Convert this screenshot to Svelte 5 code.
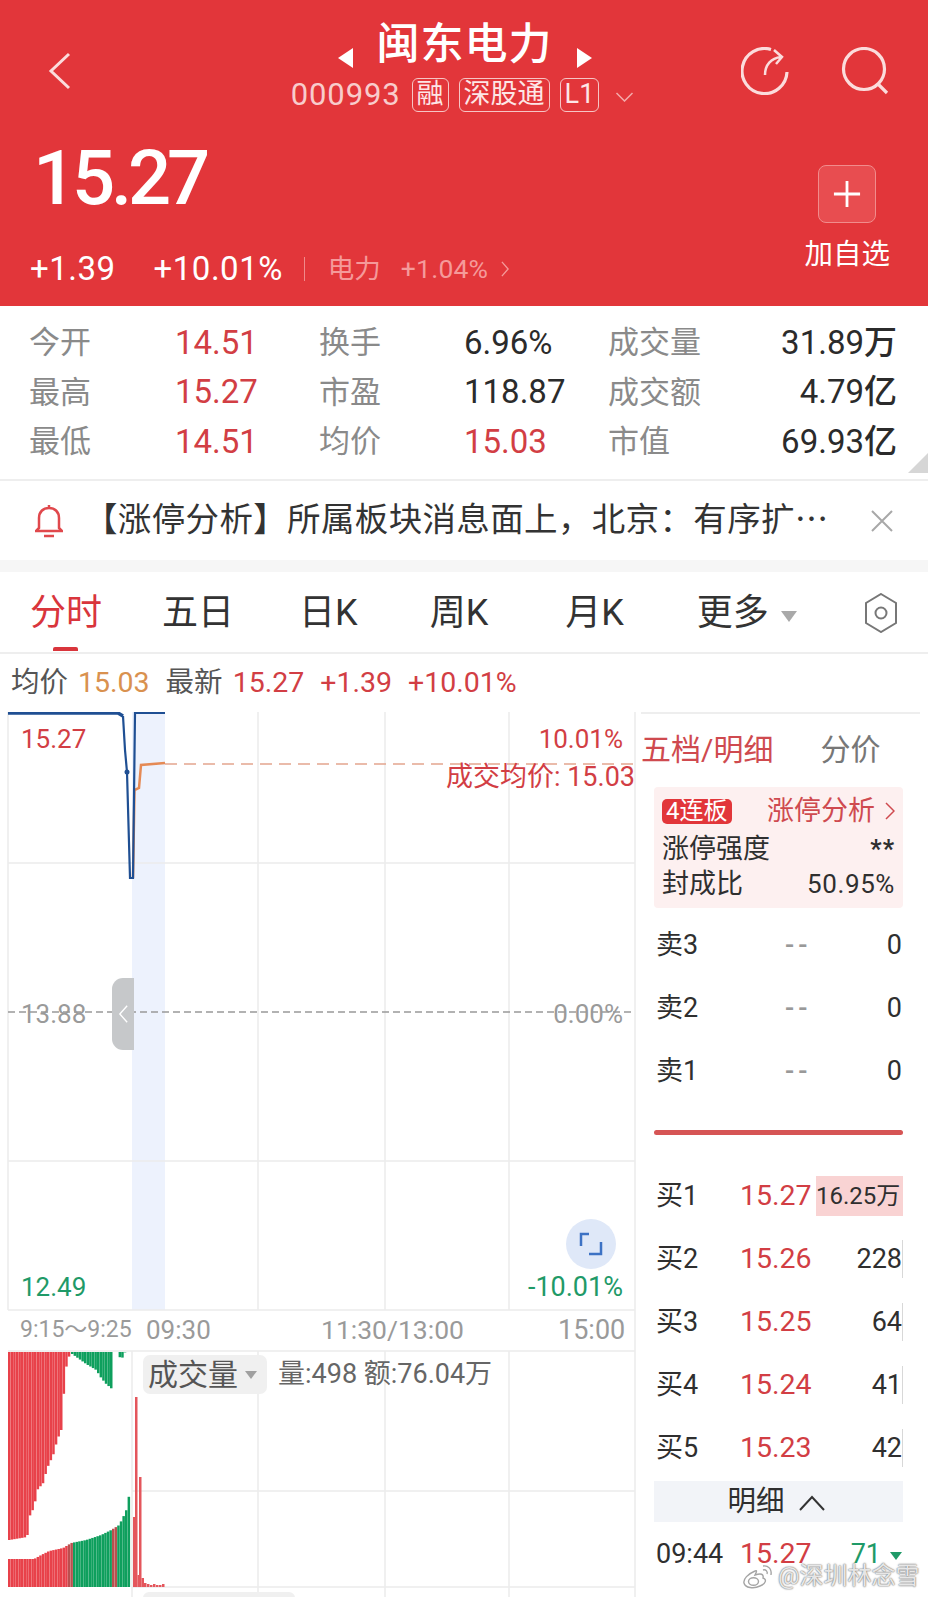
<script>
	const stats = [
		['今开', '14.51', 'up', '换手', '6.96%', '', '成交量', '31.89万'],
		['最高', '15.27', 'up', '市盈', '118.87', '', '成交额', '4.79亿'],
		['最低', '14.51', 'up', '均价', '15.03', 'up', '市值', '69.93亿']
	];
	const tabs = ['五日', '日K', '周K', '月K'];
	const sells = [['卖3'], ['卖2'], ['卖1']];
	const buys = [
		['买1', '15.27', '16.25万'],
		['买2', '15.26', '228'],
		['买3', '15.25', '64'],
		['买4', '15.24', '41'],
		['买5', '15.23', '42']
	];

	// piecewise linear lookup for the volume bar outlines
	function lerp(points, x) {
		for (let i = 1; i < points.length; i++) {
			const [x0, y0] = points[i - 1];
			const [x1, y1] = points[i];
			if (x <= x1) return y0 + ((y1 - y0) * (x - x0)) / (x1 - x0);
		}
		return points[points.length - 1][1];
	}

	const topRed = [[8, 1540], [26, 1537], [28, 1517], [33, 1507], [36, 1490], [42, 1483], [46, 1468], [52, 1455], [56, 1440], [60, 1430], [62, 1422], [63, 1375], [69, 1352]];
	const topGreen = [[71, 1354], [85, 1364], [95, 1370], [100, 1378], [105, 1384], [112, 1390]];
	const topGreen2 = [[116, 1352], [120, 1360], [124, 1352]];
	const lowBars = [[8, 1559], [33, 1559], [40, 1555], [48, 1551], [62, 1548], [70, 1543], [85, 1540], [100, 1535], [110, 1530], [118, 1525], [122, 1517], [126, 1508], [129, 1487]];

	const bars = [];
	for (let x = 8; x < 69; x += 2.6) {
		bars.push({ x, y: 1352, h: lerp(topRed, x) - 1352, c: '#e8414a' });
	}
	for (let x = 71; x < 112; x += 2.6) {
		bars.push({ x, y: 1352, h: lerp(topGreen, x) - 1352, c: '#0e9f5d' });
	}
	for (let x = 116; x < 124; x += 2.6) {
		bars.push({ x, y: 1352, h: lerp(topGreen2, x) - 1352, c: '#0e9f5d' });
	}
	for (let x = 8; x < 130; x += 2.6) {
		const y = lerp(lowBars, x);
		let c = x < 71 ? '#e8414a' : '#0e9f5d';
		if (x > 66 && x < 71) c = '#b9504f';
		if (x > 110 && x < 116) c = '#b9504f';
		bars.push({ x, y, h: 1587 - y, c });
	}
	const after = [[133, 1517], [135, 1397], [137.5, 1575], [139, 1477], [141.5, 1578], [144, 1583], [147, 1584], [150, 1585], [153, 1584], [156, 1585], [159, 1585], [162, 1584]];
	for (const [x, y] of after) {
		bars.push({ x, y, h: 1587 - y, c: '#e4565c' });
	}
</script>

<div class="page">
	<header class="top">
		<div class="nav">
			<svg class="back" viewBox="0 0 24 38"><path d="M21 2 L3 19 L21 36" /></svg>
			<div class="name">
				<div class="title">
					<span class="arrow left"></span>
					<h1>闽东电力</h1>
					<span class="arrow right"></span>
				</div>
				<div class="sub">
					<span class="code">000993</span>
					<span class="tag">融</span>
					<span class="tag">深股通</span>
					<span class="tag">L1</span>
					<svg class="down" viewBox="0 0 18 10"><path d="M1 1 L9 9 L17 1" /></svg>
				</div>
			</div>
			<div class="tools">
				<svg class="icon" viewBox="0 0 48 48">
					<path d="M30 2.5 A 22.5 22.5 0 1 0 46 25" />
					<path d="M24 28 C 24 18 30 11 40 10 M33 3 L41 10 L35 17" class="thin" />
				</svg>
				<svg class="icon" viewBox="0 0 48 48">
					<circle cx="23" cy="22" r="20.5" />
					<path d="M37 37 L46 46" />
				</svg>
			</div>
		</div>
		<div class="quote">
			<div>
				<div class="price">15.27</div>
				<div class="change">
					<span>+1.39</span>
					<span class="pct">+10.01%</span>
					<i class="bar"></i>
					<span class="sector">电力</span>
					<span class="sector-pct">+1.04%</span>
					<svg class="more" viewBox="0 0 9 18"><path d="M1 1 L8 9 L1 17" /></svg>
				</div>
			</div>
			<div class="add">
				<button class="plus" aria-label="加自选">
					<svg viewBox="0 0 30 30"><path d="M15 1 V29 M1 15 H29" /></svg>
				</button>
				<span>加自选</span>
			</div>
		</div>
	</header>

	<section class="stats">
		{#each stats as row}
			<div class="label">{row[0]}</div>
			<div class="val up">{row[1]}</div>
			<div class="label">{row[3]}</div>
			<div class="val" class:up={row[5] === 'up'}>{row[4]}</div>
			<div class="label">{row[6]}</div>
			<div class="val end">{row[7]}</div>
		{/each}
		<span class="corner"></span>
	</section>

	<section class="notice">
		<svg class="bell" viewBox="0 0 28 34">
			<path d="M14 1 V4 M4 24 V14 C4 8 8 4 14 4 C20 4 24 8 24 14 V24 L27 27 H1 Z M9 32 H19" />
		</svg>
		<p>【涨停分析】所属板块消息面上，北京：有序扩⋯</p>
		<svg class="close" viewBox="0 0 22 22"><path d="M1 1 L21 21 M21 1 L1 21" /></svg>
	</section>

	<nav class="tabs">
		<span class="tab on">分时</span>
		{#each tabs as t}
			<span class="tab">{t}</span>
		{/each}
		<span class="tab">更多</span>
		<i class="caret"></i>
		<svg class="hex" viewBox="0 0 34 40">
			<path d="M17 1 L32 10 V30 L17 39 L2 30 V10 Z" />
			<circle cx="17" cy="20" r="5.5" />
		</svg>
	</nav>

	<div class="info">
		<span class="muted">均价</span>
		<span class="avg">15.03</span>
		<span class="muted gap">最新</span>
		<span class="red">15.27</span>
		<span class="red gap2">+1.39</span>
		<span class="red gap2">+10.01%</span>
	</div>

	<main class="main">
		<div class="chart">
			<svg class="plot" viewBox="0 712 636 885">
				<rect x="132" y="712" width="33" height="598" fill="#edf2fd" />
				<g stroke="#ececec" stroke-width="1.5" fill="none">
					<path d="M8 712 V1310 M258 712 V1310 M385 712 V1310 M509 712 V1310 M635 712 V1597" />
					<path d="M8 863 H635 M8 1161 H635 M8 1310 H635 M8 1351 H635 M132 1491 H635 M132 1587 H635" />
					<path d="M258 1351 V1597 M385 1351 V1597 M509 1351 V1597 M132 1351 V1597" />
				</g>
				<path d="M8 1012 H635" stroke="#999" stroke-width="1.5" stroke-dasharray="7 4" />
				<path d="M165 764 H635" stroke="#e3a58e" stroke-width="1.5" stroke-dasharray="12 7" />
				{#each bars as b}
					<rect x={b.x} y={b.y} width="2.5" height={b.h} fill={b.c} />
				{/each}
				<path d="M133 878 L134.5 790 L139 788 L141 765 L165 763" fill="none" stroke="#e58a55" stroke-width="2.5" />
				<path d="M123 716 L125 750 L127 772 L130 878 H133 L135 713 H165" fill="none" stroke="#1f4f93" stroke-width="2.2" />
				<path d="M8 713 H118 L123 716" fill="none" stroke="#1f4f93" stroke-width="3.5" />
				<circle cx="127" cy="772" r="2.5" fill="#1f4f93" />
			</svg>
			<span class="tag-l red" style="top: 13px">15.27</span>
			<span class="tag-r red" style="top: 13px">10.01%</span>
			<span class="avg-tag">成交均价: 15.03</span>
			<span class="tag-l grey" style="top: 288px">13.88</span>
			<span class="tag-r grey" style="top: 288px">0.00%</span>
			<span class="tag-l green" style="top: 561px">12.49</span>
			<span class="tag-r green wide" style="top: 561px">-10.01%</span>
			<div class="grab">
				<svg viewBox="0 0 12 22"><path d="M10 2 L2 11 L10 20" /></svg>
			</div>
			<div class="expand">
				<svg viewBox="0 0 24 24"><path d="M10 2 H2 V14 M22 10 V22 H10" /></svg>
			</div>
			<div class="axis">
				<span class="t1">9:15～9:25</span>
				<span class="t2">09:30</span>
				<span class="t3">11:30/13:00</span>
				<span class="t4">15:00</span>
			</div>
			<div class="vol-head">
				<span class="chip">成交量<i></i></span>
				<span class="vol-text">量:498 额:76.04万</span>
			</div>
			<span class="chip2"></span>
		</div>

		<aside class="side">
			<div class="side-tabs">
				<span class="on">五档/明细</span>
				<span>分价</span>
			</div>
			<div class="limit">
				<div class="lim-row">
					<span class="badge">4连板</span>
					<span class="lim-link">涨停分析
						<svg viewBox="0 0 10 18"><path d="M1 1 L9 9 L1 17" /></svg>
					</span>
				</div>
				<div class="lim-row"><span>涨停强度</span><span class="stars">**</span></div>
				<div class="lim-row"><span>封成比</span><span class="ratio">50.95%</span></div>
			</div>
			<div class="sells">
				{#each sells as s}
					<div class="row">
						<span>{s[0]}</span>
						<span class="dash">--</span>
						<span class="qty">0</span>
					</div>
				{/each}
			</div>
			<div class="divider"></div>
			{#each buys as b, i}
				<div class="row">
					<span>{b[0]}</span>
					<span class="p">{b[1]}</span>
					<span class="qty" class:hot={i === 0} class:tick={i > 0}>{b[2]}</span>
				</div>
			{/each}
			<div class="detail">明细
				<svg viewBox="0 0 26 16"><path d="M1 15 L13 2 L25 15" /></svg>
			</div>
			<div class="row last">
				<span>09:44</span>
				<span class="p">15.27</span>
				<span class="qty green">71<i class="dn"></i></span>
			</div>
		</aside>
	</main>

	<div class="mark">
		<svg viewBox="0 0 32 26">
			<path d="M13 8 C6 11 1 16 2 20 C3 25 12 26 18 23 C24 21 25 16 21 15 C22 11 19 10 13 12 C15 8 15 7 13 8 Z" />
			<ellipse cx="11.5" cy="18.5" rx="5" ry="3.8" />
			<path d="M21 3 C26 2 30 6 29 12 M21 7 C24 6 26 9 25 11" />
		</svg>
		<span>@深圳林念雪</span>
	</div>
</div>

<style>
	:global(body) {
		margin: 0;
		background: #fff;
	}

	.page {
		position: relative;
		width: 928px;
		height: 1597px;
		overflow: hidden;
		background: #fff;
		color: #2b2b2b;
		font-family: Roboto, 'Noto Sans CJK SC', sans-serif;
		line-height: 1.2;
	}

	.top {
		height: 306px;
		background: #e2363a;
		color: #fff;
		box-sizing: border-box;
	}

	.nav {
		display: grid;
		grid-template-columns: 1fr auto 1fr;
		height: 125px;
		padding: 0 39px 0 48px;
	}

	.back {
		width: 24px;
		height: 38px;
		margin-top: 52px;
		fill: none;
		stroke: #fbdcdc;
		stroke-width: 3;
	}

	.name {
		display: flex;
		flex-direction: column;
		align-items: center;
		padding-top: 14px;
		transform: translateX(-6px);
	}

	.title {
		display: flex;
		align-items: center;
		gap: 24px;
		height: 60px;
		transform: translateX(2px);
	}

	.title h1 {
		margin: 0;
		font-size: 43px;
		font-weight: 500;
		line-height: 60px;
		letter-spacing: 1px;
	}

	.arrow {
		width: 0;
		height: 0;
		margin-top: 28px;
		border-top: 10px solid transparent;
		border-bottom: 10px solid transparent;
	}

	.arrow.left {
		border-right: 15px solid #fff;
	}

	.arrow.right {
		border-left: 15px solid #fff;
	}

	.sub {
		display: flex;
		align-items: center;
		gap: 10px;
		margin-top: 2px;
		color: #f8cccc;
	}

	.code {
		font-size: 31px;
		font-weight: 400;
		letter-spacing: 0.9px;
		margin-right: 1px;
	}

	.tag {
		box-sizing: border-box;
		height: 34px;
		padding: 0 4px;
		border: 1.5px solid #f6c5c5;
		border-radius: 6px;
		font-size: 27px;
		line-height: 30px;
		color: #fde6e6;
	}

	.down {
		width: 19px;
		height: 10px;
		margin-left: 6px;
		margin-top: 4px;
		fill: none;
		stroke: #f3aaaa;
		stroke-width: 1.5;
	}

	.tools {
		display: flex;
		justify-content: flex-end;
		gap: 52px;
		padding-top: 47px;
	}

	.icon {
		width: 48px;
		height: 48px;
		fill: none;
		stroke: #fbdcdc;
		stroke-width: 3.2;
	}

	.icon .thin {
		stroke-width: 2.5;
	}

	.quote {
		display: flex;
		justify-content: space-between;
		padding: 0 38px 0 30px;
	}

	.price {
		margin: 8px 0 0 3px;
		height: 111px;
		font-size: 76px;
		font-weight: 500;
		line-height: 90px;
		letter-spacing: -4.2px;
	}

	.change {
		display: flex;
		align-items: center;
		height: 46px;
		margin-top: 2px;
		font-size: 33px;
		letter-spacing: 0.5px;
	}

	.pct {
		margin-left: 38px;
	}

	.bar {
		width: 1px;
		height: 24px;
		margin: 0 23px 0 21px;
		background: #f08a8a;
	}

	.sector {
		font-size: 26.5px;
		color: #f59a9a;
		letter-spacing: 0;
	}

	.sector-pct {
		margin-left: 20px;
		font-size: 26.5px;
		color: #f59a9a;
		letter-spacing: 0.2px;
	}

	.more {
		width: 8px;
		height: 16px;
		margin-left: 13px;
		fill: none;
		stroke: #f59a9a;
		stroke-width: 1.5;
	}

	.add {
		display: flex;
		flex-direction: column;
		align-items: center;
		font-size: 28.5px;
		line-height: 36px;
	}

	.plus {
		display: flex;
		align-items: center;
		justify-content: center;
		box-sizing: border-box;
		width: 58px;
		height: 58px;
		margin: 40px 0 14px;
		padding: 0;
		background: #e84d50;
		border: 1.5px solid #f18c8c;
		border-radius: 8px;
	}

	.plus svg {
		width: 28px;
		height: 28px;
		fill: none;
		stroke: #fff;
		stroke-width: 3;
	}

	.stats {
		position: relative;
		display: grid;
		grid-template-columns: 146px 144px 145px 144px 120px 1fr;
		grid-auto-rows: 49.5px;
		align-items: center;
		height: 175px;
		box-sizing: border-box;
		padding: 12px 31px 0 29px;
		border-bottom: 2px solid #eeeeee;
	}

	.label {
		font-size: 31px;
		color: #8a8a8a;
	}

	.val {
		font-size: 33px;
		font-weight: 450;
		color: #2b2b2b;
	}

	.val.up {
		color: #d23e44;
	}

	.val.end {
		text-align: right;
	}

	.corner {
		position: absolute;
		right: 0;
		bottom: 6px;
		width: 0;
		height: 0;
		border-left: 20px solid transparent;
		border-bottom: 20px solid #d6d6d6;
	}

	.notice {
		display: flex;
		align-items: center;
		height: 79px;
		padding: 0 35px;
		border-bottom: 12px solid #f6f6f6;
	}

	.bell {
		width: 28px;
		height: 34px;
		flex: none;
		fill: none;
		stroke: #e0484c;
		stroke-width: 2.5;
	}

	.notice p {
		flex: 1;
		margin: 0 0 0 21px;
		font-size: 33.5px;
		letter-spacing: 0.35px;
		white-space: nowrap;
		color: #333;
	}

	.close {
		width: 22px;
		height: 22px;
		flex: none;
		fill: none;
		stroke: #a8a8a8;
		stroke-width: 2;
	}

	.tabs {
		position: relative;
		display: flex;
		align-items: center;
		height: 82px;
		padding: 4px 0 0 30px;
		border-bottom: 2px solid #eeeeee;
		box-sizing: border-box;
		font-size: 36px;
		color: #333;
	}

	.tab:nth-child(1) {
		margin-right: 60px;
	}

	.tab:nth-child(2) {
		margin-right: 65px;
	}

	.tab:nth-child(3) {
		margin-right: 72px;
	}

	.tab:nth-child(4) {
		margin-right: 77px;
	}

	.tab:nth-child(5) {
		margin-right: 73px;
	}

	.tab.on {
		position: relative;
		color: #d9353c;
	}

	.tab.on::after {
		content: '';
		position: absolute;
		left: 23px;
		bottom: -15px;
		width: 25px;
		height: 4px;
		background: #d9353c;
		border-radius: 2px 2px 0 0;
	}

	.caret {
		margin: 4px 0 0 12px;
		width: 0;
		height: 0;
		border-left: 8px solid transparent;
		border-right: 8px solid transparent;
		border-top: 11px solid #a9a9a9;
	}

	.hex {
		position: absolute;
		left: 864px;
		top: 21px;
		width: 34px;
		height: 40px;
		fill: none;
		stroke: #777;
		stroke-width: 2;
	}

	.info {
		display: flex;
		align-items: center;
		height: 58px;
		padding-left: 11px;
		font-size: 28.5px;
	}

	.muted {
		color: #555;
	}

	.avg {
		margin-left: 10px;
		color: #d9914f;
	}

	.gap {
		margin-left: 16px;
	}

	.red {
		margin-left: 10px;
		color: #d23e44;
		font-weight: 450;
	}

	.gap2 {
		margin-left: 16px;
	}

	.main {
		display: flex;
		height: 885px;
	}

	.chart {
		position: relative;
		width: 636px;
		flex: none;
	}

	.plot {
		position: absolute;
		inset: 0;
		width: 636px;
		height: 885px;
	}

	.tag-l,
	.tag-r,
	.avg-tag {
		position: absolute;
		margin: 0;
		font-size: 26px;
		line-height: 28px;
		white-space: nowrap;
		font-weight: 400;
	}

	.tag-l {
		left: 21px;
	}

	.tag-r {
		right: 13px;
	}

	.tag-r.wide {
		font-size: 27px;
	}

	.avg-tag {
		right: 1px;
		top: 51px;
		font-size: 27px;
		color: #d23e44;
	}

	.grey {
		color: #9a9a9a;
	}

	.green {
		color: #1f9a68;
	}

	.grab {
		position: absolute;
		left: 112px;
		top: 266px;
		display: flex;
		align-items: center;
		justify-content: center;
		width: 22px;
		height: 72px;
		background: #c6c8ca;
		border-radius: 11px 0 0 11px;
	}

	.grab svg {
		width: 11px;
		height: 22px;
		fill: none;
		stroke: #fff;
		stroke-width: 1.5;
	}

	.expand {
		position: absolute;
		left: 566px;
		top: 507px;
		display: flex;
		align-items: center;
		justify-content: center;
		width: 50px;
		height: 50px;
		background: #dfe8f8;
		border-radius: 50%;
	}

	.expand svg {
		width: 24px;
		height: 24px;
		fill: none;
		stroke: #3d72c4;
		stroke-width: 2.5;
	}

	.axis {
		position: absolute;
		left: 0;
		top: 598px;
		width: 636px;
		height: 40px;
		color: #9a9a9a;
		line-height: 40px;
	}

	.axis span {
		position: absolute;
		white-space: nowrap;
	}

	.t1 {
		left: 20px;
		font-size: 23px;
	}

	.t2 {
		left: 146px;
		font-size: 26px;
	}

	.t3 {
		left: 321px;
		font-size: 26.5px;
	}

	.t4 {
		left: 558px;
		font-size: 27px;
	}

	.vol-head {
		position: absolute;
		left: 143px;
		top: 643px;
		display: flex;
		align-items: center;
		gap: 11px;
	}

	.chip {
		display: flex;
		align-items: center;
		gap: 7px;
		height: 39px;
		padding: 0 10px 0 5px;
		background: #f0f0f0;
		border-radius: 7px;
		font-size: 30px;
		color: #555;
	}

	.chip i {
		width: 0;
		height: 0;
		border-left: 6px solid transparent;
		border-right: 6px solid transparent;
		border-top: 8px solid #a0a0a0;
	}

	.vol-text {
		font-size: 27px;
		color: #666;
	}

	.chip2 {
		position: absolute;
		left: 143px;
		top: 880px;
		width: 152px;
		height: 8px;
		background: #f0f0f0;
		border-radius: 6px 6px 0 0;
	}

	.side {
		width: 292px;
		min-width: 0;
		flex: none;
		box-sizing: border-box;
		padding: 0 25px 0 18px;
		font-size: 27px;
		color: #2f2f2f;
	}

	.side-tabs {
		display: flex;
		gap: 47px;
		height: 75px;
		margin-left: -13px;
		font-size: 30px;
		line-height: 72px;
		color: #777;
		white-space: nowrap;
		border-top: 2px solid #eeeeee;
		margin-right: -17px;
		box-sizing: border-box;
	}

	.side-tabs .on {
		color: #cf4a4f;
	}

	.limit {
		box-sizing: border-box;
		height: 121px;
		padding: 10px 8px 0;
		background: #fdf0f0;
		border-radius: 4px;
	}

	.lim-row {
		display: flex;
		align-items: center;
		justify-content: space-between;
		height: 35px;
		font-size: 27px;
		white-space: nowrap;
	}

	.lim-row:first-child {
		height: 28px;
		margin-bottom: 7px;
	}

	.badge {
		padding: 0 4px;
		background: #e2363a;
		border-radius: 5px;
		color: #fff;
		font-size: 24px;
		line-height: 25px;
	}

	.lim-link {
		display: flex;
		align-items: center;
		gap: 10px;
		font-size: 27px;
		color: #cf4a4f;
	}

	.lim-link svg {
		width: 10px;
		height: 18px;
		fill: none;
		stroke: #cf4a4f;
		stroke-width: 1.5;
	}

	.stars {
		font-size: 25px;
		font-weight: 700;
		letter-spacing: 1px;
	}

	.ratio {
		font-size: 26px;
		letter-spacing: 0.6px;
	}

	.sells {
		margin-top: 5.5px;
	}

	.row {
		display: grid;
		grid-template-columns: 84px 76px 1fr;
		align-items: center;
		height: 63px;
		padding-left: 2px;
		white-space: nowrap;
	}

	.dash {
		padding-left: 45px;
		font-weight: 500;
		color: #999;
		letter-spacing: 4px;
	}

	.p {
		font-size: 28.5px;
		font-weight: 450;
		color: #d23e44;
	}

	.qty {
		justify-self: end;
		font-size: 27px;
		padding-right: 1px;
	}

	.qty.hot {
		box-sizing: border-box;
		display: flex;
		align-items: center;
		justify-content: flex-end;
		justify-self: stretch;
		height: 40px;
		padding-right: 3px;
		background: #f9d3d3;
		font-size: 24px;
	}

	.qty.tick {
		position: relative;
	}

	.qty.tick::after {
		content: '';
		position: absolute;
		right: 0;
		top: -3px;
		width: 1.5px;
		height: 38px;
		background: #d8d8d8;
	}

	.divider {
		height: 5px;
		margin: 27.5px 0 29.5px;
		background: #d65555;
		border-radius: 3px;
	}

	.detail {
		display: flex;
		align-items: center;
		justify-content: center;
		gap: 14px;
		box-sizing: border-box;
		height: 41px;
		margin-top: 1px;
		padding: 3px 5px 0 0;
		background: #f2f4f8;
		font-size: 28.5px;
	}

	.detail svg {
		width: 26px;
		height: 16px;
		fill: none;
		stroke: #333;
		stroke-width: 2;
	}

	.last {
		height: 66px;
	}

	.dn {
		display: inline-block;
		margin-left: 9px;
		vertical-align: middle;
		width: 0;
		height: 0;
		border-left: 6.5px solid transparent;
		border-right: 6.5px solid transparent;
		border-top: 8px solid #1f9a68;
	}

	.mark {
		position: absolute;
		left: 742px;
		top: 1561px;
		display: flex;
		align-items: center;
		gap: 4px;
		font-size: 24px;
		line-height: 30px;
		color: rgba(255, 255, 255, 0.82);
		text-shadow: 0 0 1.5px #777, 0 0 1.5px #777;
		white-space: nowrap;
	}

	.mark svg {
		width: 32px;
		height: 26px;
		fill: rgba(255, 255, 255, 0.6);
		stroke: #a5a5a5;
		stroke-width: 1.4;
	}
</style>
